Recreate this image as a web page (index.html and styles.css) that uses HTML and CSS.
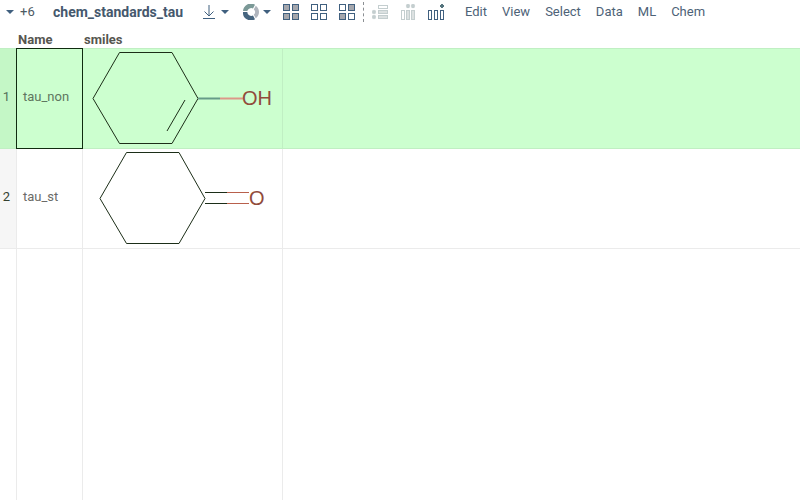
FILE: index.html
```html
<!DOCTYPE html>
<html lang="en">
<head>
<meta charset="utf-8">
<title>chem_standards_tau</title>
<link rel="stylesheet" href="styles.css">
</head>
<body>
<header class="toolbar">
  <button class="more" aria-label="6 more views"><svg class="caret" viewBox="0 0 8 4"><path d="M0 0H8L4 4Z"/></svg><span>+6</span></button>
  <h1 class="title">chem_standards_tau</h1>
  <div class="tools downloads">
    <button class="drop" aria-label="Download">
      <svg class="icon" viewBox="0 0 16 16"><path class="stroke" d="M8 1V12M3.500 7.500L8 12L12.500 7.500"/><path class="stroke" d="M2 14.500H14"/></svg>
      <svg class="caret" viewBox="0 0 8 4"><path d="M0 0H8L4 4Z"/></svg>
    </button>
    <button class="drop" aria-label="Add viewer">
      <svg class="icon" viewBox="0 0 16 16"><path d="M0 7A7.800 7.800 0 0 1 12 .8L10 4.500A4 4 0 0 0 4.300 7Z" fill="#7b9997"/><path d="M0 8H4.300A4 4 0 0 0 10 11.500L12 15.200A7.800 7.800 0 0 1 0 8Z" fill="#46657f"/><path d="M12.800 1.800A7.600 7.600 0 0 1 12.800 14.200L10.800 10.800A4 4 0 0 0 10.800 5.200Z" fill="#b0b5bd"/></svg>
      <svg class="caret" viewBox="0 0 8 4"><path d="M0 0H8L4 4Z"/></svg>
    </button>
  </div>
  <div class="tools selection">
    <button aria-label="Select all"><svg class="icon" viewBox="0 0 16 16"><g class="stroke solid"><rect x=".5" y=".5" width="6" height="6"/><rect x="9.500" y=".5" width="6" height="6"/><rect x=".5" y="9.500" width="6" height="6"/><rect x="9.500" y="9.500" width="6" height="6"/></g></svg></button>
    <button aria-label="Select none"><svg class="icon" viewBox="0 0 16 16"><g class="stroke"><rect x=".5" y=".5" width="6" height="6"/><rect x="9.500" y=".5" width="6" height="6"/><rect x=".5" y="9.500" width="6" height="6"/><rect x="9.500" y="9.500" width="6" height="6"/></g></svg></button>
    <button aria-label="Invert selection"><svg class="icon" viewBox="0 0 16 16"><g class="stroke"><rect x=".5" y=".5" width="6" height="6"/><rect class="solid" x="9.500" y=".5" width="6" height="6"/><rect class="solid" x=".5" y="9.500" width="6" height="6"/><rect x="9.500" y="9.500" width="6" height="6"/></g></svg></button>
  </div>
  <div class="tools columns">
    <button aria-label="Remove rows" disabled><svg class="icon" viewBox="0 0 16 16"><g class="faint"><rect x="6.500" y="1.500" width="9" height="3"/><rect class="tint" x="6.500" y="6.500" width="9" height="3"/><rect class="tint" x="6.500" y="11.500" width="9" height="3"/></g><path class="cross" d="M.5 6.500l3 3m0-3l-3 3M.5 11.500l3 3m0-3l-3 3"/></svg></button>
    <button aria-label="Remove columns" disabled><svg class="icon" viewBox="0 0 16 16"><g class="faint"><rect x="1.500" y="6.500" width="3" height="9"/><rect class="tint" x="6.500" y="6.500" width="3" height="9"/><rect class="tint" x="11.500" y="6.500" width="3" height="9"/></g><path class="cross" d="M6.500 .5l3 3m0-3l-3 3M11.500 .5l3 3m0-3l-3 3"/></svg></button>
    <button aria-label="Add column"><svg class="icon" viewBox="0 0 16 16"><g class="stroke"><rect x=".5" y="6.500" width="3" height="9"/><rect x="6.500" y="6.500" width="3" height="9"/><rect x="12.500" y="6.500" width="3" height="9"/></g><path class="plus" d="M14 0V4M12 2H16"/></svg></button>
  </div>
  <nav class="menu">
    <a href="#">Edit</a><a href="#">View</a><a href="#">Select</a><a href="#">Data</a><a href="#">ML</a><a href="#">Chem</a>
  </nav>
</header>
<main>
<table class="grid">
  <colgroup><col class="c-num"><col class="c-name"><col class="c-mol"><col></colgroup>
  <thead><tr><th></th><th>Name</th><th>smiles</th><th></th></tr></thead>
  <tbody>
    <tr class="row active">
      <td class="num">1</td><td class="name current">tau_non</td>
      <td><svg class="mol" viewBox="0 0 199 99" role="img" aria-label="Cyclohexenol"><g class="bond"><path d="M115 49.500L89 94.500H36.500L10 49.500L36.500 3.500H89L115 49.500"/><path d="M102 51L84 82"/></g><path class="teal" d="M115 49.500H137"/><path class="pink" d="M137 49.500H160"/><text x="159" y="56">OH</text></svg></td>
      <td></td>
    </tr>
    <tr class="row">
      <td class="num">2</td><td class="name">tau_st</td>
      <td><svg class="mol" viewBox="0 0 199 99" role="img" aria-label="Cyclohexanone"><g class="bond"><path d="M122 49.500L96 94.500H43.500L17 49.500L43.500 3.500H96L122 49.500"/><path d="M122 43.500H144M122 54.500H144"/></g><path class="red" d="M144 43.500H166M144 54.500H166"/><text x="166" y="56">O</text></svg></td>
      <td></td>
    </tr>
    <tr class="rest"><td></td><td></td><td></td><td></td></tr>
  </tbody>
</table>
</main>
</body>
</html>
```
FILE: styles.css
```css
* { box-sizing: border-box; }
body {
  margin: 0;
  min-height: 100vh;
  font: 13px/16px Roboto, "Liberation Sans", sans-serif;
  color: #4d5a63;
  background: #fff;
}
.toolbar {
  display: flex;
  align-items: center;
  height: 24px;
  padding-left: 6px;
}
button {
  display: flex;
  align-items: center;
  padding: 0;
  border: 0;
  background: none;
  font: inherit;
  color: inherit;
}
svg { display: block; }
.more { gap: 6px; width: 47px; }
.title {
  width: 149px;
  margin: 0;
  font-size: 14px;
  font-weight: 700;
  line-height: 16px;
  color: #45586d;
}
.tools { display: flex; gap: 12px; }
.downloads { gap: 15px; }
.drop { gap: 4px; }
.drop .icon { margin-left: -1px; }
.icon { width: 16px; height: 16px; }
.caret { width: 8px; height: 4px; fill: #40607f; }
.stroke { fill: none; stroke: #40607f; }
.solid { fill: #a5a7ad; }
.faint { fill: none; stroke: #c4cecf; }
.tint { fill: #dce1e1; }
.cross { stroke: #c4cecf; stroke-width: 2; }
.plus { stroke: #55747d; stroke-width: 2; }
.selection {
  margin-left: 12px;
  padding-right: 8px;
}
.columns {
  align-items: center;
  height: 20px;
  padding-left: 8px;
  border-left: 1px dashed #8b8f93;
}
.menu { display: flex; gap: 15px; margin-left: 21px; }
.menu a { color: #4d6277; text-decoration: none; }

.grid {
  width: 100%;
  height: calc(100vh - 24px);
  table-layout: fixed;
  border-collapse: separate;
  border-spacing: 0;
}
.c-num { width: 17px; }
.c-name { width: 66px; }
.c-mol { width: 200px; }
th {
  height: 25px;
  padding: 8px 0 0 1px;
  text-align: left;
  font-weight: 700;
  color: #565650;
  border-bottom: 1px solid #c0efc3;
}
td { padding: 0; border-right: 1px solid #ebebeb; }
td:last-child { border-right: 0; }
.row td { height: 100px; border-bottom: 1px solid #ebebeb; }
.row .num {
  padding-right: 3px;
  text-align: center;
  color: #34402f;
  background: #f6f6f6;
}
.row .num, .row .name { padding-bottom: 3px; }
.name { padding-left: 6px; color: #6b6b68; }
.active td { background: #ccffcf; border-color: #c0efc3; }
.active .num { background: #c4f7c6; color: #55705a; }
.active .name { color: #5e7660; }
.active .current {
  border-color: #102c10;
  box-shadow: -1px 0 #102c10, 0 -1px #102c10, -1px -1px #102c10, -1px 1px #102c10;
  clip-path: inset(-1px 0 0 -1px);
}
.mol { width: 199px; height: 99px; }
.bond { fill: none; stroke: #1c2e18; }
.teal { stroke: #669b88; stroke-width: 2; }
.pink { stroke: #dc9888; stroke-width: 2; }
.red { stroke: #b8604c; }
.mol text { font: 20px "Liberation Sans", Arial, sans-serif; fill: #914b3b; }
```
